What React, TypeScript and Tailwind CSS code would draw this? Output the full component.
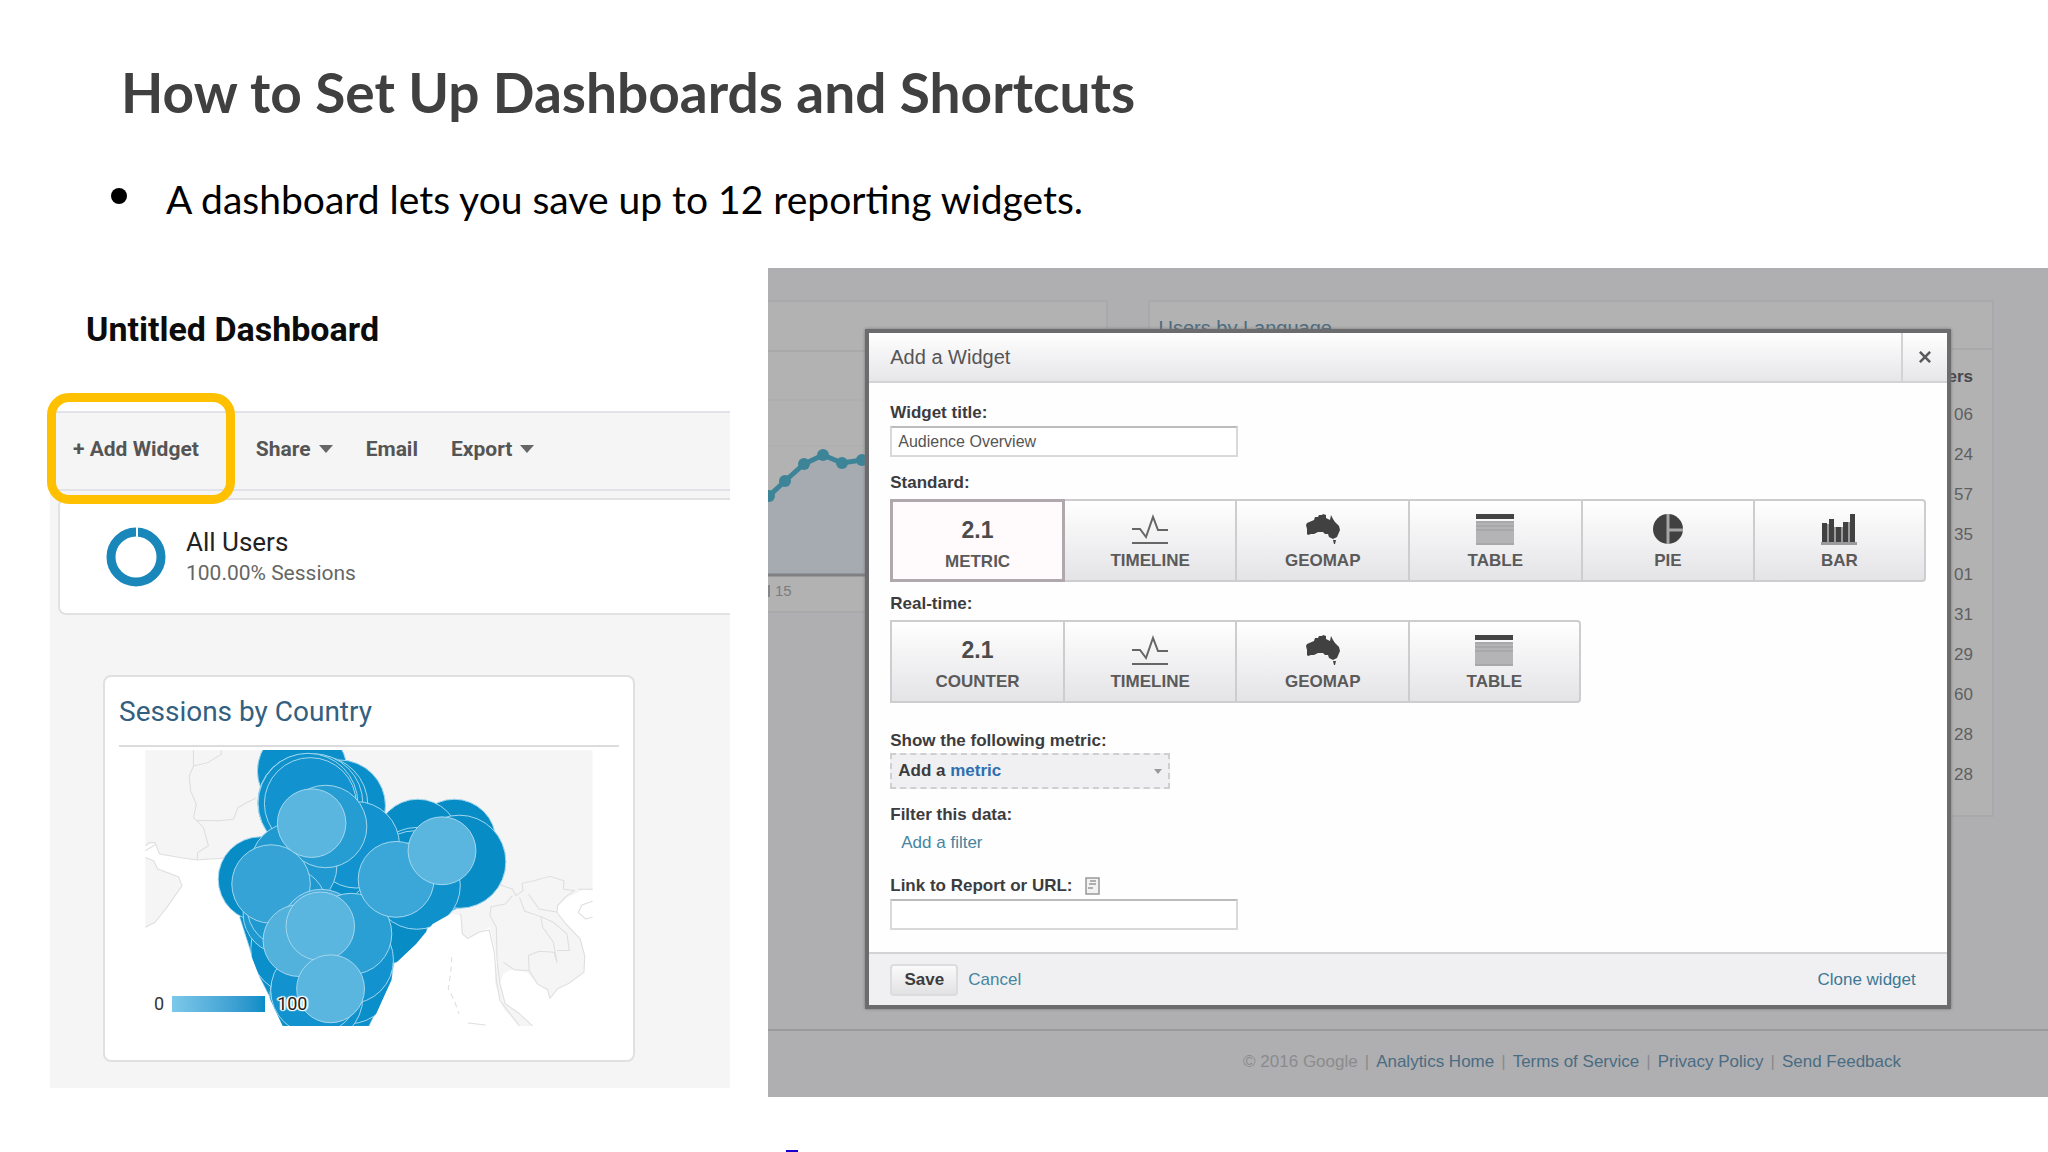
import type { ReactNode } from "react";

type Bubble = [cx: number, cy: number, r: number, fill: string];

const bubbles: Bubble[] = [
  [308, 90, 135, "#0a8fca"],
  [420, 195, 138, "#0a8fca"],
  [320, 185, 146, "#0a8fca"],
  [357, 192, 148, "#0f92cc"],
  [340, 188, 150, "#0f92cc"],
  [325, 187, 150, "#0f92cc"],
  [332, 188, 138, "#1292ce"],
  [765, 300, 125, "#078cc6"],
  [655, 300, 125, "#078cc6"],
  [650, 385, 125, "#078cc6"],
  [645, 395, 125, "#078cc6"],
  [780, 363, 140, "#078cc6"],
  [182, 415, 127, "#078cc6"],
  [560, 545, 125, "#078cc6"],
  [290, 625, 137, "#0a8fca"],
  [450, 720, 130, "#0a8fca"],
  [350, 770, 140, "#0f92cc"],
  [470, 312, 130, "#1292ce"],
  [282, 375, 130, "#1f99cf"],
  [652, 435, 131, "#0f92cc"],
  [250, 520, 120, "#1f99cf"],
  [262, 500, 120, "#1f99cf"],
  [450, 658, 132, "#1292ce"],
  [345, 750, 132, "#1292ce"],
  [378, 257, 124, "#259dd2"],
  [214, 430, 118, "#35a3d5"],
  [365, 568, 122, "#48aadb"],
  [455, 580, 122, "#2a9fd3"],
  [590, 416, 114, "#3aa7d8"],
  [298, 600, 108, "#52b2dc"],
  [336, 247, 103, "#5ab6de"],
  [728, 330, 102, "#5ab6de"],
  [362, 557, 103, "#5ab6de"],
  [393, 745, 102, "#5ab6de"],
];

function BubbleMap() {
  return (
    <svg viewBox="-165 27 1347 831" className="block w-full" role="img" aria-label="Sessions by country">
      <g transform="matrix(1.0714 0 0 1 -330 -240)" fill="#f5f5f5" stroke="#dedede" strokeWidth="3" strokeLinejoin="round">
        <path stroke="none" d="M155 268H1410V690L1385 686 1360 700 1340 710 1312 735 1310 755 1330 785 1378 840 1388 885 1386 935 1345 968 1312 985 1290 1014 1284 988 1255 970 1225 935 1180 928 1160 940 1150 970 1165 1030 1205 1060 1242 1097H1205L1160 1045 1135 965 1142 900 1122 800 1085 820 1060 834 1042 815 1040 765 900 730 500 700 380 592 300 598 195 580 182 545 155 556Z" />
        <path d="M155 590L178 600 190 625 248 648 258 675 212 745 182 785 155 800" />
        <path fill="none" d="M155 556L165 546 182 545 195 580 260 592 300 598 382 592M290 268V315L278 345 282 390 298 430 290 470 318 500 332 555 302 575 300 598M290 315L330 305 368 280V268M298 478L360 480 402 475 415 440 440 425 465 412M155 570L185 550" />
        <path fill="none" d="M1150 672L1185 685 1195 705 1215 690 1212 668 1245 660 1290 647 1330 660 1328 685 1360 690 1335 708 1312 735 1310 755 1335 790 1375 835 1388 885 1386 935 1345 968 1312 985 1290 1014 1284 988 1255 970 1232 930 1230 885 1260 872 1302 875 1310 905 1300 845 1270 800 1265 768 1220 752 1205 710M1185 705L1165 730 1125 738 1122 765 1140 800 1142 900 1150 970 1165 1030 1205 1060 1242 1097M1040 760L1045 820 1060 834 1090 815 1120 808 1135 880 1140 960 1150 1020 1205 1097M1310 870L1345 870 1338 820 1300 785 1265 768M1232 930L1190 928 1160 905M1230 700L1260 745 1312 755M1410 722L1380 733 1370 755 1390 775 1410 770M1410 686L1370 686M1060 1088L1110 1094" />
        <path fill="none" strokeDasharray="16 12" d="M1015 890L1012 935 1005 985 1022 1020 1035 1060" />
      </g>
      <path fill="#0a8fca" stroke="#9fd5ee" strokeWidth="2" d="M120 530L155 640 180 710 255 858H508L575 720 583 668 640 610 700 540 780 500 600 300H200Z" />
      <clipPath id="landmass">
        <path d="M0 0H1000V510H770L700 550 650 610 585 672 575 720 508 870H255L180 710 152 640 150 590 120 530 0 500Z" />
      </clipPath>
      <g stroke="#a3d7ee" strokeWidth="3" clipPath="url(#landmass)">
        {bubbles.map(([cx, cy, r, fill], i) => (
          <circle key={i} cx={cx} cy={cy} r={r} fill={fill} />
        ))}
      </g>
    </svg>
  );
}

function TimelineIcon() {
  return (
    <svg viewBox="0 0 36 30" className="h-[30px] w-9" fill="none" stroke="#666" strokeWidth="2">
      <path d="M0 15H8L14 23 21 3 26 16H36" />
      <path d="M0 29H36" />
    </svg>
  );
}

function GeomapIcon() {
  return (
    <svg viewBox="0 0 34 30" className="h-[30px] w-[34px]" fill="#414141">
      <path d="M0 11L1 9 8 6 9 3 12 3 13 1 16 1 17 0 20 1 20 4 24 6 25 1 27 5 29 8 33 12 34 16 31 23 27 25 23 23 22 20 19 20 17 18 12 18 8 20 5 20 2 21 1 20 1 15Z" />
      <path d="M27 26H30L29 30H28Z" />
    </svg>
  );
}

function TableIcon() {
  return (
    <svg viewBox="0 0 38 31" className="h-[31px] w-[38px]">
      <path fill="#b4b4b6" d="M0 7H38V31H0Z" />
      <path fill="#444" d="M0 0H38V5H0Z" />
      <path stroke="#9c9c9e" strokeWidth="1" d="M0 8H38M0 12H38M0 16H38M0 30H38" />
    </svg>
  );
}

function PieIcon() {
  return (
    <svg viewBox="0 0 30 30" className="size-[30px]">
      <circle cx="15" cy="15" r="15" fill="#414141" />
      <path d="M15 0V30M15 16H30" stroke="#a5a5a7" strokeWidth="3" />
    </svg>
  );
}

function BarIcon() {
  return (
    <svg viewBox="0 0 36 31" className="h-[31px] w-9">
      <path fill="#9a9a9c" d="M0 28H36V31H0ZM6 10H8V28H6ZM13 13H15V28H13ZM20 13H22V28H20ZM27 8H29V28H27Z" />
      <path fill="#414141" d="M1 9H6V28H1ZM8 5H13V28H8ZM15 13H20V28H15ZM22 8H27V28H22ZM29 0H34V28H29Z" />
    </svg>
  );
}

const number = <span className="text-[23px] leading-[30px] font-bold text-[#4c4c4c]">2.1</span>;

const standard: [string, ReactNode][] = [
  ["METRIC", number],
  ["TIMELINE", <TimelineIcon />],
  ["GEOMAP", <GeomapIcon />],
  ["TABLE", <TableIcon />],
  ["PIE", <PieIcon />],
  ["BAR", <BarIcon />],
];

const realtime: [string, ReactNode][] = [
  ["COUNTER", number],
  ["TIMELINE", <TimelineIcon />],
  ["GEOMAP", <GeomapIcon />],
  ["TABLE", <TableIcon />],
];

function TypeButton({ label, icon, selected, last }: { label: string; icon: ReactNode; selected?: boolean; last?: boolean }) {
  return (
    <button
      type="button"
      className={
        "relative flex h-[83px] flex-col items-center pt-3 " +
        (last ? "rounded-r border-r-2 " : "") +
        (selected
          ? "z-10 -mr-0.5 border-[3px] border-[#b0a8ac] bg-[#fffbfc]"
          : "border-y-2 border-l-2 border-[#cdcccf] bg-linear-to-b from-white to-[#e4e3e6]")
      }
    >
      <span className="flex h-8 items-center">{icon}</span>
      <span className="mt-1.5 text-[17px] leading-5 font-bold text-[#5a5a5a]">{label}</span>
    </button>
  );
}

function Caret() {
  return (
    <svg viewBox="0 0 14 8" className="h-2 w-3.5" fill="#666">
      <path d="M0 0H14L7 8Z" />
    </svg>
  );
}

function DashboardPanel() {
  return (
    <section className="ml-[50px] min-w-0 font-['Roboto',sans-serif]">
      <h2 className="pt-10 pl-9 text-[34px] leading-[42px] font-bold text-[#0c0c0c]">Untitled Dashboard</h2>
      <div className="mt-[61px] flex h-20 items-center border-y-2 border-[#e2e3e8] bg-[#f5f5f5] pb-1 text-[21px] leading-6 font-bold whitespace-nowrap text-[#555]">
        <div className="relative pr-[57px] pl-[23px]">
          <button type="button">+ Add Widget</button>
          <span className="pointer-events-none absolute -top-11 -left-[3px] h-[111px] w-[188px] rounded-[22px] border-[9px] border-[#ffc000]" />
        </div>
        <button type="button" className="flex items-center gap-2">Share <Caret /></button>
        <button type="button" className="ml-[33px]">Email</button>
        <button type="button" className="ml-[33px] flex items-center gap-2">Export <Caret /></button>
      </div>
      <div className="bg-[#f5f5f5] pt-[7px] pb-[26px]">
        <div className="ml-2 flex h-[117px] items-center rounded-l-lg border-2 border-r-0 border-[#e2e2e5] bg-white pl-[46px]">
          <svg viewBox="0 0 60 60" className="size-[60px]" fill="none">
            <circle cx="30" cy="30" r="25" stroke="#1a87bb" strokeWidth="9" />
            <path d="M31 0V11" stroke="white" strokeWidth="2" />
          </svg>
          <div className="ml-5">
            <p className="text-[26px] leading-8 text-[#222]">All Users</p>
            <p className="text-[21px] leading-[30px] text-[#666]">100.00% Sessions</p>
          </div>
        </div>
        <article className="mt-[60px] mr-[95px] ml-[53px] rounded-lg border-2 border-[#e0e0e0] bg-white px-[14px] pb-[34px]">
          <h3 className="border-b-2 border-[#dcdcdc] pt-4 pb-[14px] text-[28px] leading-[38px] text-[#33607f]">Sessions by Country</h3>
          <div className="relative mx-[26px] mt-[3px]">
            <BubbleMap />
            <div className="absolute bottom-2.5 left-[9px] flex items-center text-[18px] leading-6 text-[#333]">
              0
              <span className="ml-2 h-4 w-[93px] bg-linear-to-r from-[#7cc8ea] to-[#058dc7]" />
              <span className="ml-3 text-[#222] [text-shadow:0_0_2px_#fff,1px_1px_1px_#fff,-1px_-1px_1px_#fff,1px_-1px_1px_#fff,-1px_1px_1px_#fff,2px_0_1px_#fff,-2px_0_1px_#fff]">
                100
              </span>
            </div>
          </div>
        </article>
      </div>
    </section>
  );
}

const users = ["06", "24", "57", "35", "01", "31", "29", "60", "28", "28"];

function Backdrop() {
  return (
    <div className="absolute inset-x-0 top-0 flex items-start pt-8">
      <div className="h-[313px] w-[26.6%] border-2 border-l-0 border-[#a9a9ab] bg-[#b2b2b2]">
        <div className="h-[50px] border-b-2 border-[#a9a9ab]" />
        <svg viewBox="0 0 340 225" className="block h-[225px] w-[340px]" fill="none">
          <path d="M0 48H340M0 94H340" stroke="#acacae" strokeWidth="1" />
          <path d="M0 145L17 129 36 112 55 103 74 111 94 108H340V223H0Z" fill="#a5abb0" />
          <path d="M0 145L17 129 36 112 55 103 74 111 94 108H130" stroke="#3d8498" strokeWidth="5" />
          <g fill="#3d8498">
            <circle cx="1" cy="144" r="6" />
            <circle cx="17" cy="129" r="6" />
            <circle cx="36" cy="112" r="6" />
            <circle cx="55" cy="103" r="6" />
            <circle cx="74" cy="111" r="6" />
            <circle cx="94" cy="108" r="6" />
          </g>
          <path d="M0 223H340" stroke="#808083" strokeWidth="3" />
        </svg>
        <div className="flex items-center gap-[5px] pt-1 text-[15px] leading-5 text-[#7c7c7e]">
          <span className="h-3 w-0.5 bg-[#858587]" />
          15
        </div>
      </div>
      <div className="mr-[54px] ml-[40px] flex-1 border-2 border-[#a9a9ab] bg-[#b2b2b2] pb-5">
        <h3 className="h-12 border-b-2 border-[#a9a9ab] pt-3 pl-2 text-[20px] leading-7 text-[#4c6c80]">Users by Language</h3>
        <table className="mt-[9px] mr-[19px] ml-auto text-right text-[17px] text-[#5f5f61]">
          <thead>
            <tr>
              <th className="h-9 text-right font-bold text-[#474749]">Users</th>
            </tr>
          </thead>
          <tbody>
            {users.map((n, i) => (
              <tr key={i}>
                <td className="h-10">{n}</td>
              </tr>
            ))}
          </tbody>
        </table>
      </div>
    </div>
  );
}

function WidgetDialog() {
  const field = "block h-[31px] w-[348px] border-2 border-[#d9d9db] border-t-[#bcbcbe] bg-white px-1.5 text-[16px] leading-5 text-[#555]";
  return (
    <form
      role="dialog"
      aria-labelledby="dialog-title"
      className="relative mx-[7.6%] border-4 border-[#6c6c6e] bg-[#fefefe] text-[17px] leading-5 text-[#3c3c3e] shadow-[0_0_3px_#777]"
      onSubmit={(e) => e.preventDefault()}
    >
      <header className="flex h-[50px] items-stretch border-b-2 border-[#d3d3d5] bg-linear-to-b from-white to-[#e6e6e9]">
        <h2 id="dialog-title" className="flex flex-1 items-center pl-[21px] text-[20px] leading-6 text-[#555]">Add a Widget</h2>
        <button type="button" aria-label="Close" className="flex w-[46px] items-center justify-center border-l-2 border-[#d3d3d5]">
          <svg viewBox="0 0 14 14" className="size-3" stroke="#5a5a5a" strokeWidth="3">
            <path d="M1 1L13 13M13 1L1 13" />
          </svg>
        </button>
      </header>
      <div className="px-[21px] pt-5 pb-[22px]">
        <label htmlFor="widget-title" className="block font-bold">Widget title:</label>
        <input id="widget-title" defaultValue="Audience Overview" className={"mt-[3px] " + field} />
        <p className="mt-4 font-bold">Standard:</p>
        <div className="mt-1.5 grid grid-cols-6">
          {standard.map(([label, icon], i) => (
            <TypeButton key={label} label={label} icon={icon} selected={i === 0} last={i === 5} />
          ))}
        </div>
        <p className="mt-3 font-bold">Real-time:</p>
        <div className="mt-1.5 grid w-2/3 grid-cols-4">
          {realtime.map(([label, icon], i) => (
            <TypeButton key={label} label={label} icon={icon} last={i === 3} />
          ))}
        </div>
        <p className="mt-7 font-bold">Show the following metric:</p>
        <button type="button" className="mt-0.5 flex h-9 w-[280px] items-center border-2 border-dashed border-[#cfcfd1] bg-[#f0f0f2] px-1.5 font-bold">
          Add a&nbsp;<span className="text-[#2f6fb0]">metric</span>
          <svg viewBox="0 0 10 6" className="ml-auto h-[5px] w-2" fill="#999">
            <path d="M0 0H10L5 6Z" />
          </svg>
        </button>
        <p className="mt-4 font-bold">Filter this data:</p>
        <a href="#filter" className="mt-2 ml-[11px] block w-fit text-[#4684a0]">Add a filter</a>
        <div className="mt-[23px] flex items-center gap-3">
          <label htmlFor="widget-link" className="font-bold">Link to Report or URL:</label>
          <svg viewBox="0 0 15 18" className="h-[18px] w-[15px]" fill="#f2f2f2" stroke="#999" strokeWidth="1.5">
            <path d="M1 1H14V17H1Z" />
            <path d="M5 4H11M4 7H11M3 11H8" />
          </svg>
        </div>
        <input id="widget-link" className={"mt-[3px] " + field} />
      </div>
      <footer className="flex h-[53px] items-center border-t-2 border-[#d3d3d5] bg-[#f0f0f2] px-[21px]">
        <button type="submit" className="h-8 w-[68px] rounded-sm border-2 border-[#dcdcde] bg-linear-to-b from-[#fafafa] to-[#e2e2e4] font-bold">Save</button>
        <a href="#cancel" className="ml-2.5 text-[#4684a0]">Cancel</a>
        <a href="#clone" className="mr-2.5 ml-auto text-[#3c7896]">Clone widget</a>
      </footer>
    </form>
  );
}

export default function App() {
  const links = ["Analytics Home", "Terms of Service", "Privacy Policy", "Send Feedback"];
  return (
    <main className="relative min-h-screen overflow-hidden bg-white">
      <h1 className="pt-[58px] pl-[121px] font-['Lato',sans-serif] text-[55px] leading-[68px] font-bold text-[#404040]">
        How to Set Up Dashboards and Shortcuts
      </h1>
      <ul className="mt-[49px] pl-[111px] font-['Lato',sans-serif] text-[39px] leading-[48px] text-black">
        <li className="flex">
          <span className="mt-[13px] mr-[39px] size-4 rounded-full bg-black" />
          A dashboard lets you save up to 12 reporting widgets.
        </li>
      </ul>
      <div className="mt-[45px] grid grid-cols-[730fr_1280fr] items-start gap-x-[38px]">
        <DashboardPanel />
        <section className="relative min-w-0 overflow-hidden bg-[#afafb1] pt-[61px] font-['Liberation_Sans',Arial,sans-serif]">
          <Backdrop />
          <WidgetDialog />
          <footer className="mt-5 flex h-[68px] items-center justify-end gap-[7px] border-t-2 border-[#9b9b9d] pr-[147px] pb-1 text-[17px] leading-5 whitespace-nowrap text-[#8b8b8d]">
            <span>© 2016 Google</span>
            {links.map((l) => (
              <span key={l} className="flex gap-[7px]">
                <span>|</span>
                <a href="#footer" className="text-[#4a6c82]">{l}</a>
              </span>
            ))}
          </footer>
        </section>
      </div>
      <a href="#next" aria-label="Next" className="absolute bottom-0 left-[786px] h-0.5 w-3 bg-[#1a00d0]" />
    </main>
  );
}
